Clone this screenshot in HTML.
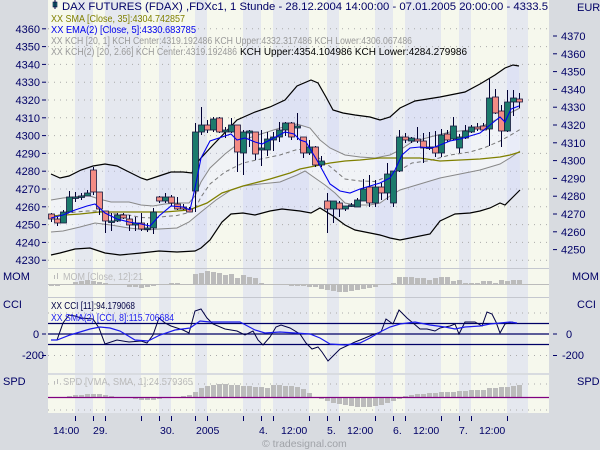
<!DOCTYPE html>
<html><head><meta charset="utf-8"><style>
html,body{margin:0;padding:0;background:#d8dbe0;}
svg{display:block;font-family:"Liberation Sans",sans-serif;}
</style></head><body>
<svg id="s" width="600" height="450" xmlns="http://www.w3.org/2000/svg"></svg>
<script>
const S=document.getElementById('s');let h='';
h+='<rect width="600" height="450" fill="#d8dbe0"/>';
const st=[[48,75,'Y'],[75,93,'B'],[93,105,'Y'],[105,141,'B'],[141,159,'Y'],[159,171,'B'],[171,195,'Y'],[195,207,'B'],[207,243,'Y'],[243,261,'B'],[261,273,'Y'],[273,309,'B'],[309,327,'Y'],[327,339,'B'],[339,375,'Y'],[375,393,'B'],[393,405,'Y'],[405,441,'B'],[441,459,'Y'],[459,471,'B'],[471,507,'Y'],[507,528,'B'],[528,549,'Y']];
const panels=[[0,268],[269,297],[298,373],[375,413]];
for(const p of panels)for(const s of st)h+=`<rect x="${s[0]}" y="${p[0]}" width="${s[1]-s[0]}" height="${p[1]-p[0]}" fill="${s[2]=='Y'?'#f6f8ed':'#e5e8ef'}"/>`;
h+='<rect x="48" y="268" width="501" height="1" fill="#c4c7cf"/><rect x="48" y="297" width="501" height="1" fill="#c4c7cf"/>';
const L=v=>100+(4320-v)*1.78;
for(let v=4230;v<=4360;v+=10){const y=L(v);h+=`<line x1="48" x2="549" y1="${y}" y2="${y}" stroke="#aaa" stroke-dasharray="1,5"/>`;
 h+=`<text x="40" y="${y+4}" font-size="11" fill="#000066" text-anchor="end">${v}</text><line x1="42" x2="46" y1="${y}" y2="${y}" stroke="#000066"/>`;}
for(let v=4250;v<=4370;v+=10){const y=36+(4370-v)*1.78;h+=`<line x1="553" x2="557" y1="${y}" y2="${y}" stroke="#000066"/><text x="561" y="${y+4}" font-size="11" fill="#000066">${v}</text>`;}
for(const y of [313,355.5])h+=`<line x1="48" x2="549" y1="${y}" y2="${y}" stroke="#aaa" stroke-dasharray="1,5"/>`;
for(const y of [384,410])h+=`<line x1="48" x2="549" y1="${y}" y2="${y}" stroke="#aaa" stroke-dasharray="1,5"/>`;
const P=a=>a.map(p=>p.join(',')).join(' ');
const ub=[[51,174],[60,178],[69,176],[81,170],[93,166],[105,164],[117,166],[129,172],[141,178],[147,180],[159,176],[171,172],[183,172],[192,173],[195,165],[201,158],[213,145],[237,120],[255,112],[270,107],[285,100],[297,86],[311,80],[318,83],[326,97],[333,110],[343,113],[355,115],[370,117],[380,120],[390,117],[400,108],[415,101],[440,97],[450,95],[465,92],[480,84],[495,75],[505,68],[513,65],[519,66]];
const lb=[[51,255],[60,253],[75,249],[90,248],[105,253],[120,255],[141,253],[159,251],[177,252],[195,251],[201,248],[210,240],[222,222],[231,214],[243,213],[255,215],[270,211],[282,209],[300,211],[311,213],[320,208],[333,216],[345,225],[355,230],[370,233],[380,235],[390,238],[400,240],[410,238],[430,234],[440,221],[455,214],[470,213],[480,211],[490,208],[500,203],[505,205],[513,197],[520,190]];
h+=`<polygon points="${P(ub)} ${P(lb.slice().reverse())}" fill="rgba(205,212,255,0.3)"/>`;
const ug=[[51,200],[63,198],[75,197],[87,195],[99,199],[111,202],[129,202],[141,205],[153,206],[165,204],[177,203],[189,203],[195,196],[201,182],[210,168],[225,154],[243,140],[261,134],[280,128],[297,124],[310,128],[320,140],[330,148],[345,155],[360,157],[375,158],[390,155],[400,150],[412,142],[430,137],[450,132],[470,130],[485,125],[500,118],[510,113],[520,108]];
const lg=[[51,232],[63,231],[80,227],[95,223],[111,225],[129,228],[147,230],[159,229],[177,228],[189,222],[201,212],[216,200],[231,190],[243,186],[260,184],[280,182],[297,175],[305,171],[315,178],[325,185],[335,193],[345,203],[355,205],[370,205],[380,203],[390,196],[400,190],[420,184],[440,178],[460,174],[480,170],[500,164],[510,158],[520,151]];
h+=`<polygon points="${P(ug)} ${P(lg.slice().reverse())}" fill="rgba(255,255,255,0.35)"/>`;
h+=`<polyline points="${P(ub)}" fill="none" stroke="#000" stroke-width="1.2"/><polyline points="${P(lb)}" fill="none" stroke="#000" stroke-width="1.2"/>`;
h+=`<polyline points="${P(ug)}" fill="none" stroke="#888"/><polyline points="${P(lg)}" fill="none" stroke="#888"/>`;
const cen=ug.map((p,i)=>{let q=lg.reduce((a,b)=>Math.abs(b[0]-p[0])<Math.abs(a[0]-p[0])?b:a);return [p[0],(p[1]+q[1])/2];});
h+=`<polyline points="${P(cen)}" fill="none" stroke="#777" stroke-dasharray="4,3"/>`;
const sma=[[51,216],[80,214],[99,212],[120,212],[141,212],[165,212],[189,210],[207,203],[222,193],[243,186],[270,179],[290,173],[300,169],[330,163],[345,161],[360,160],[380,158],[400,158],[420,158],[440,161],[460,160],[480,159],[500,157],[510,155],[520,152]];
h+=`<polyline points="${P(sma)}" fill="none" stroke="#808000" stroke-width="1.3"/>`;
const C=[[51,214,219,213,222,'r'],[57,219,223,217,226,'r'],[63,212,223,210,223,'g'],[69,197,212,191,212,'g'],[75,197,198,192,202,'g'],[81,196,197,193,200,'g'],[87,193,196,190,196,'g'],[93,170,192,167,195,'r'],[99,192,209,192,215,'r'],[105,211,221,211,233,'r'],[111,221,222,213,231,'g'],[117,215,221,213,222,'g'],[123,215,218,213,219,'r'],[129,219,225,215,231,'r'],[135,223,225,217,231,'g'],[141,223,229,213,231,'r'],[147,228,229,223,232,'g'],[153,212,228,208,234,'g'],[159,197,201,196,203,'r'],[165,197,201,193,203,'g'],[171,197,203,195,206,'r'],[177,204,209,197,210,'r'],[183,207,209,204,210,'r'],[189,209,212,207,212,'r'],[195,132,191,123,212,'g'],[201,125,132,107,135,'g'],[207,125,130,120,133,'r'],[213,119,130,117,132,'g'],[219,118,132,117,133,'r'],[225,130,132,127,138,'g'],[231,125,132,118,133,'g'],[237,125,152,125,172,'r'],[243,132,153,130,175,'g'],[249,131,133,130,147,'g'],[255,132,154,132,160,'r'],[261,148,150,130,166,'g'],[267,139,150,132,156,'g'],[273,137,140,132,151,'g'],[279,130,137,122,142,'g'],[285,123,130,122,136,'g'],[291,123,137,122,140,'r'],[297,126,128,113,140,'g'],[303,137,153,137,158,'r'],[309,147,153,140,155,'g'],[315,147,165,146,167,'r'],[321,161,165,156,167,'g'],[327,201,209,193,233,'r'],[333,201,209,201,223,'g'],[339,203,209,201,217,'r'],[345,206,209,206,211,'g'],[351,205,206,203,207,'g'],[357,200,207,198,207,'g'],[363,189,201,179,201,'g'],[369,187,203,175,207,'r'],[375,187,203,180,207,'g'],[381,187,193,183,200,'r'],[387,174,193,163,200,'g'],[393,171,203,171,207,'g'],[399,137,171,130,172,'g'],[405,137,140,133,143,'r'],[411,138,141,137,143,'g'],[417,139,141,127,143,'r'],[423,141,148,133,163,'r'],[429,147,148,132,150,'g'],[435,147,153,131,157,'r'],[441,135,153,129,157,'g'],[447,134,140,130,142,'r'],[453,126,139,117,140,'g'],[459,137,148,134,153,'g'],[465,131,138,125,139,'g'],[471,127,132,125,133,'g'],[477,127,129,123,131,'r'],[483,126,130,123,131,'r'],[489,98,129,79,146,'g'],[495,97,113,89,114,'r'],[501,111,131,105,147,'r'],[507,102,131,90,132,'g'],[513,98,102,90,116,'g'],[519,99,102,93,108,'r']];
for(const c of C){const t=Math.min(c[1],c[2]),b=Math.max(c[1],c[2]);
 h+=`<line x1="${c[0]+.5}" x2="${c[0]+.5}" y1="${c[3]}" y2="${c[4]}" stroke="#000033"/>`;
 h+=`<rect x="${c[0]-2.5}" y="${t}" width="6" height="${Math.max(b-t,1.5)}" fill="${c[5]=='g'?'#1b7a6c':'#f38c84'}" stroke="#1a1a40" stroke-width="0.8"/>`;}
const ema=[[51,218],[63,215],[75,210],[87,206],[95,204],[105,213],[117,219],[129,222],[141,224],[150,226],[159,216],[171,206],[183,207],[190,210],[195,188],[201,158],[210,141],[222,137],[231,134],[237,140],[245,138],[255,142],[262,144],[270,140],[285,132],[294,134],[300,140],[306,142],[318,162],[330,184],[340,191],[350,193],[360,189],[370,186],[380,183],[390,178],[395,170],[402,155],[410,148],[420,147],[432,148],[440,145],[450,141],[460,139],[470,136],[480,133],[490,125],[500,117],[505,122],[511,109],[519,106]];
h+=`<polyline points="${P(ema)}" fill="none" stroke="#0000ee" stroke-width="1.1"/>`;
const mom=[-2,-2,-1,-1,2,3,4,3,2,1,0,-1,-1,-3,-3,-4,-3,-2,-1,0,1,1,0,0,10,11,13,12,11,9,10,6,9,7,6,1,-1,-1,0,-1,-2,-2,-2,-3,-3,-5,-6,-7,-8,-8,-7,-6,-5,-4,-3,-1,0,1,7,7,7,6,6,4,6,7,7,3,4,1,1,1,3,3,1,4,3,4,4];
mom.forEach((v,i)=>{const x=49+6*i;if(v)h+=`<rect x="${x}" y="${v>0?284-v:284}" width="5" height="${Math.abs(v)}" fill="#bbb"/>`;});
h+='<line x1="48" x2="549" y1="284.5" y2="284.5" stroke="#bbb"/>';
const spd=[-1,-1,0,1,2,2,3,3,3,2,1,0,0,-1,-2,-3,-3,-3,-2,-1,0,0,1,2,5,9,11,12,13,13,12,12,11,11,10,10,9,12,12,11,11,10,8,4,0,-2,-4,-6,-7,-8,-9,-10,-10,-10,-9,-8,-6,-4,-2,1,2,3,3,4,4,5,5,5,6,6,7,7,7,9,9,10,10,11,12];
spd.forEach((v,i)=>{const x=49+6*i;if(v)h+=`<rect x="${x}" y="${v>0?397-v:397}" width="5" height="${Math.abs(v)}" fill="#bbb"/>`;});
h+='<line x1="48" x2="549" y1="397.5" y2="397.5" stroke="#800080" stroke-width="1.2"/>';
for(const y of [323.5,334,344.5])h+=`<line x1="48" x2="549" y1="${y}" y2="${y}" stroke="#000066" stroke-width="1.2"/>`;
const cci=[[51,340],[57,340],[63,323],[69,315],[75,316],[81,318],[93,319],[99,328],[105,344],[117,340],[129,342],[141,341],[147,343],[153,335],[159,318],[165,323],[171,326],[177,328],[183,330],[189,333],[195,311],[201,309],[207,318],[213,324],[225,329],[237,331],[245,335],[253,331],[258,340],[263,345],[270,337],[276,327],[281,325],[290,328],[300,334],[306,343],[312,349],[318,347],[322,352],[328,361],[333,356],[340,349],[355,342],[365,338],[372,335],[381,332],[386,319],[393,324],[399,310],[407,318],[413,323],[420,329],[427,329],[435,331],[440,328],[450,326],[455,324],[459,334],[465,322],[475,322],[482,326],[487,312],[492,314],[496,322],[500,333],[505,324],[512,322],[515,323]];
const cs=[[51,340],[57,340],[70,335],[80,332],[90,329],[100,327],[110,328],[120,331],[135,340],[148,341],[160,335],[175,330],[190,328],[200,321],[210,322],[240,322],[255,330],[265,333],[280,332],[310,334],[320,338],[330,344],[345,345],[360,343],[370,338],[380,332],[390,327],[400,324],[415,322],[430,325],[445,327],[455,329],[465,327],[480,326],[490,324],[500,323],[510,322],[517,323]];
h+=`<polyline points="${P(cci)}" fill="none" stroke="#000044"/><polyline points="${P(cs)}" fill="none" stroke="#1a1aee" stroke-width="1.2"/>`;
const T=(x,y,t,c,s=11)=>`<text x="${x}" y="${y}" font-size="${s}" fill="${c}">${t}</text>`;
const TL=(x,y,t,c,w,s=10.5)=>`<text x="${x}" y="${y}" font-size="${s}" fill="${c}" textLength="${w}" lengthAdjust="spacingAndGlyphs">${t}</text>`;
h+='<rect x="53" y="2" width="4" height="5" fill="#1b7a6c" stroke="#000044" stroke-width=".6"/><line x1="55" x2="55" y1="0" y2="9" stroke="#000044"/>';
h+=TL(62,10,'DAX FUTURES (FDAX) ,FDXc1, 1 Stunde - 28.12.2004 14:00:00 - 07.01.2005 20:00:00 - 4333.5','#000066',486,11);
h+=TL(51,22,'XX SMA [Close, 35]:4304.742857','#808000',134);
h+=TL(51,33,'XX EMA(2) [Close, 5]:4330.683785','#0000ee',145);
h+=TL(51,44,'XX KCH [20, 1] KCH Center:4319.192486 KCH Upper:4332.317486 KCH Lower:4306.067486','#999',361);
h+=TL(51,55,'XX KCH(2) [20, 2.66] KCH Center:4319.192486','#999',186)+TL(240,55,'KCH Upper:4354.104986 KCH Lower:4284.279986','#000',227);
h+=T(577,11,'EUR','#000066',11);
h+=TL(63,280,'MOM [Close, 12]:21','#bbb',80)+'<rect x="54" y="275" width="1" height="4" fill="#bbb"/><rect x="57" y="273" width="1" height="6" fill="#bbb"/>';
h+=TL(51,309,'XX CCI [11]:94.179068','#000044',84)+TL(51,321,'XX SMA(2) [CCI, 8]:115.706684','#1a1aee',123);
h+=TL(63,385,'SPD [VMA, SMA, 1]:24.579365','#bbb',130)+'<rect x="54" y="381" width="1" height="3" fill="#bbb"/><rect x="57" y="379" width="1" height="5" fill="#bbb"/>';
h+=T(3,280,'MOM','#000066')+T(3,308,'CCI','#000066')+T(3,385,'SPD','#000066');
h+=T(572,280,'MOM','#000066')+T(577,308,'CCI','#000066')+T(577,385,'SPD','#000066');
h+=T(33,338,'0','#000066')+T(22,359,'-200','#000066')+'<line x1="42" x2="46" y1="334" y2="334" stroke="#000066"/><line x1="42" x2="46" y1="355.5" y2="355.5" stroke="#000066"/>';
h+=T(566,338,'0','#000066')+T(562,359,'-200','#000066')+'<line x1="553" x2="557" y1="334" y2="334" stroke="#000066"/><line x1="553" x2="557" y1="355.5" y2="355.5" stroke="#000066"/>';
for(const x of [75,93,105,141,159,171,195,207,243,261,273,309,327,339,375,393,405,441,459,471,507])h+=`<line x1="${x+.5}" x2="${x+.5}" y1="416" y2="421" stroke="#000066"/>`;
for(const [x,t] of [[53,'14:00'],[93,'29.'],[160,'30.'],[196,'2005'],[259,'4.'],[281,'12:00'],[327,'5.'],[347,'12:00'],[393,'6.'],[413,'12:00'],[459,'7.'],[479,'12:00']])h+=T(x,434,t,'#000066',10.5);
h+=T(262,447,'© tradesignal.com','#a0a3a8',10.5);
S.innerHTML=h;
</script>
</body></html>
